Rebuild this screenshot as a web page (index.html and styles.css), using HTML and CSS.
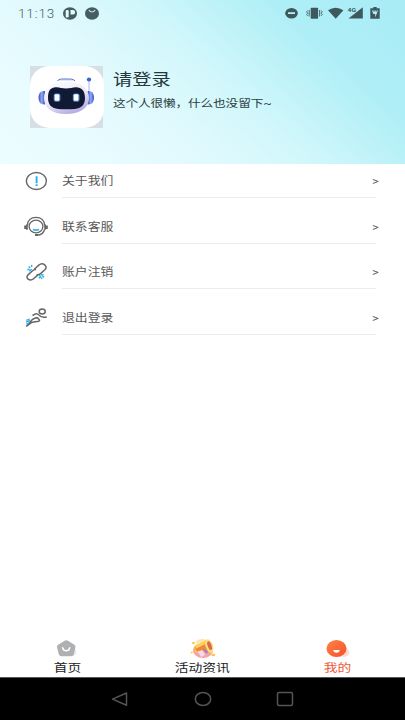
FILE: index.html
```
<!DOCTYPE html>
<html lang="zh-CN">
<head>
<meta charset="utf-8">
<title>我的</title>
<link rel="stylesheet" href="styles.css">
</head>
<body>
<div class="screen">
  <header class="hero">
    <div class="status">
      <span class="clock">11:13</span>
      <svg class="s-p" width="14" height="13" viewBox="0 0 14 13"><ellipse cx="7" cy="6.5" rx="7" ry="6.2" fill="#455c61"/><rect x="2.7" y="3" width="3" height="7.4" rx="1" fill="#e4fafc"/><path d="M7.5 3H10a1.7 1.7 0 0 1 0 4.4H7.5z" fill="#e4fafc"/></svg>
      <svg class="s-bag" width="14" height="13" viewBox="0 0 14 13"><ellipse cx="7" cy="6.5" rx="7" ry="6.2" fill="#455c61"/><path d="M3.8 3.2Q7 6.9 10.2 3.2" fill="none" stroke="#c8e8eb" stroke-width="1.1"/></svg>
      <svg class="s-right" width="96" height="14" viewBox="0 0 96 14" fill="#3e595e">
        <ellipse cx="6.5" cy="7.2" rx="6.3" ry="5.3"/><rect x="3" y="6.2" width="7" height="1.8" fill="#b5eff5"/>
        <rect x="25.700" y="1.8" width="7.4" height="11" rx=".8"/>
        <path d="M24.200 4v6.500M34.600 4v6.500M22.700 4.500l-1.100 1.300 1.100 1.400-1.100 1.300 1.100 1.300M36.100 4.500l1.100 1.300-1.100 1.400 1.100 1.300-1.100 1.300" fill="none" stroke="#3e595e" stroke-width=".9"/>
        <path d="M43 4.3Q50.7-.8 58.4 4.3L50.7 12.8z"/>
        <path d="M77.8 1.3v11.2H63.5z"/><text x="62.500" y="5.6" font-size="6" font-weight="700" textLength="8.5" lengthAdjust="spacingAndGlyphs">4G</text>
        <path d="M85.3 2.3h3V1h3.4v1.3h3v10.5h-9.4z"/><path d="M87 4.500h6L90.200 11.500V8H88.300z" fill="#b5eff5"/><path d="M89 4v2M91.200 4v2" stroke="#3e595e" stroke-width=".7"/>
      </svg>
    </div>
    <div class="profile">
      <div class="avatar">
        <svg width="74" height="62" viewBox="0 0 74 62">
          <defs>
            <linearGradient id="head" x2=".5" y2="1"><stop stop-color="#fff"/><stop offset=".6" stop-color="#ece8f8"/><stop offset="1" stop-color="#b9afe4"/></linearGradient>
            <linearGradient id="ear"><stop stop-color="#3447bd"/><stop offset=".5" stop-color="#8dabf5"/><stop offset="1" stop-color="#3e4bc5"/></linearGradient>
          </defs>
          <rect width="74" height="62" rx="20" ry="19" fill="#fff"/>
          <path d="M27.500 15q.8-2 4-2h9q3.400 0 4.500 2" fill="#dfe7fb" stroke="#5365bd" stroke-width=".9"/>
          <path d="M59 14v14" stroke="#c3caf3" stroke-width="1.400"/><ellipse cx="59" cy="13.500" rx="2.200" ry="1.900" fill="#3b66cc"/>
          <path d="M15 25q-6-1-6.500 6-.2 8 6.500 7.500z" fill="url(#ear)"/><path d="M57.500 25q6-1 6.500 6 .2 8-6.500 7.500z" fill="url(#ear)"/>
          <path d="M36 15.500C50 15.500 59 22 59 32S50 48 36 48 14 42 14 32s8-16.500 22-16.500z" fill="url(#head)"/>
          <path d="M24 21.500c5-1 7 1 12 1s8-2 12-1c5 .8 7 5 7 10.500 0 7-4 10.500-10 10.900q-9 .8-17 0C22 42.400 18 39 18 32c0-6 1.500-9.700 6-10.500z" fill="#111a35"/>
          <rect x="23.700" y="27.500" width="6.700" height="8.200" rx="2" fill="#5784cc"/><rect x="42.800" y="27.500" width="6.700" height="8.200" rx="2" fill="#5784cc"/>
          <rect x="24.700" y="28.200" width="4.600" height="6.600" rx="1.200" fill="#fff"/><rect x="43.800" y="28.200" width="4.600" height="6.600" rx="1.200" fill="#fff"/>
        </svg>
      </div>
      <div class="who">
        <h1 class="wide">请登录</h1>
        <p class="wide">这个人很懒，什么也没留下~</p>
      </div>
    </div>
  </header>
  <main class="menu">
    <div class="row">
      <svg class="ico" width="24" height="22" viewBox="0 0 24 22"><ellipse cx="12.400" cy="11" rx="10" ry="8.500" fill="none" stroke="#686868" stroke-width="1.400"/><path d="M12.600 6.300v6.900M12.600 14.300v1.600" stroke="#25b1e6" stroke-width="1.900"/></svg>
      <div class="cell"><span class="wide">关于我们</span><i class="wide">&gt;</i></div>
    </div>
    <div class="row">
      <svg class="ico" width="24" height="22" viewBox="0 0 24 22" fill="none" stroke="#666" stroke-width="1.300"><ellipse cx="12" cy="10.500" rx="6.900" ry="6.300"/><path d="M3.300 9.500C3.500 4.400 7 1.300 12 1.300s8.500 3.100 8.700 8.200M20.500 13.500c-.8 3.500-3.700 5.500-7.300 5.500"/><path d="M1.100 9.500v3.400M2.900 8.500v5.300M21.100 8.500v5.300M22.900 9.500v3.400M11 19h3" stroke-width="1.800"/><path d="M9 13.500q3 1.300 6 0" stroke="#25b1e6" stroke-width="1.600"/></svg>
      <div class="cell"><span class="wide">联系客服</span><i class="wide">&gt;</i></div>
    </div>
    <div class="row">
      <svg class="ico" width="24" height="22" viewBox="0 0 24 22" fill="none" stroke="#666" stroke-width="1.500"><path d="M10.300 8.200l4.500-4.100c1.700-1.400 4.300-1.500 5.900-.3 1.800 1.400 1.800 3.500.2 5l-4.300 3.800c-1.300 1.100-2.700 1.400-4 1M12 8.700c-1.200-.4-2.400.1-3.700 1.300L4.200 13.600c-1.700 1.500-1.500 3.400-.1 4.500 1.700 1.300 4 1 5.500-.3l4.100-3.700"/><path d="M4.800 5.500l1.500 1.500M7.500 3.800l.3 2M3.300 8.500h2.300M5.300 10.300l2.500-2M15 14.300l2 1.500M14.800 17l2-.8M17 13.700l2.500.3M17.500 16.500l.3 1.700M18.300 15.500l1.800.5" stroke="#25b1e6" stroke-width="1.400"/></svg>
      <div class="cell"><span class="wide">账户注销</span><i class="wide">&gt;</i></div>
    </div>
    <div class="row">
      <svg class="ico" width="24" height="22" viewBox="0 0 24 22" fill="none" stroke="#666" stroke-width="1.500"><ellipse cx="18.200" cy="4.500" rx="3" ry="2.500"/><path d="M8.500 8.500l3-1.600c1.200-.5 2.400 0 3.200 1 1.800 2.300 4 3 8 2M12.800 10.300c2 1.500 3 2.700 2.700 3.400-.5 1-3.500 1-5.700 1.300l-2.500.6L2.300 19.500M8.300 12.500l4.500-2.200M8.300 12.500L2.300 19.500" stroke-linejoin="round"/><path d="M2.300 13.300l3.500-1.300M2 15.200l4-1.500M2.400 17.200l2.500-1.200" stroke="#25b1e6" stroke-width="1.300"/></svg>
      <div class="cell"><span class="wide">退出登录</span><i class="wide">&gt;</i></div>
    </div>
  </main>
  <nav class="tabs">
    <div class="tab">
      <svg width="30" height="22" viewBox="0 0 30 22"><ellipse cx="18.500" cy="14" rx="5" ry="4" fill="#e8e9ea"/><path d="M11.700 2.800q1.500-.9 3.300 0l6.300 3.900q1.500.9 1.100 2.500l-1.700 7.400q-.4 1.700-2.500 1.700H8.500q-2 0-2.600-1.700L4 9.200Q3.700 7.600 5.100 6.700z" fill="#aeb0b2"/><path d="M9.700 9.800q.5 2.900 3.500 2.900t3.500-2.900" fill="none" stroke="#fff" stroke-width="1.500" stroke-linecap="round"/></svg>
      <span class="wide">首页</span>
    </div>
    <div class="tab">
      <svg width="30" height="22" viewBox="0 0 30 22"><ellipse cx="15" cy="12.500" rx="10" ry="7.500" fill="#f5a4a1"/><ellipse cx="14" cy="4" rx="6" ry="3" fill="#ffe5ab"/><path d="M5.500 9L19.500 1.500l5 13-14 .5q-4 0-5-6z" fill="#ffc53f"/><path d="M7 9.500l9-5 4 8.500-9 1q-3-.5-4-4.500z" fill="#ef873f"/><path d="M7.500 8.500l9-4.500.8 2-9 4.500z" fill="#ffd45b"/><ellipse cx="21.300" cy="8" rx="3.600" ry="7" transform="rotate(-20 21.300 8)" fill="#ffdc80"/><ellipse cx="21.600" cy="7.700" rx="1.900" ry="4.600" transform="rotate(-20 21.600 7.700)" fill="#d96c46"/><path d="M9.500 13.500l5-1.500 2.500 5-3.800 2z" fill="#f3d7ed"/><path d="M15 12l3-.5 2.500 3-2.500 1z" fill="#9f82cd"/><ellipse cx="5.500" cy="5" rx="1.700" ry="1.300" fill="#ffcf55"/><ellipse cx="25.300" cy="17" rx="2" ry="1.300" fill="#ffc744"/><ellipse cx="3.700" cy="14.500" rx="1.200" ry="1" fill="#ffcf55"/></svg>
      <span class="wide">活动资讯</span>
    </div>
    <div class="tab on">
      <svg width="30" height="22" viewBox="0 0 30 22"><defs><linearGradient id="face" x2="1" y2="1"><stop stop-color="#ff8244"/><stop offset="1" stop-color="#f4512c"/></linearGradient></defs><ellipse cx="20.500" cy="14.200" rx="5.700" ry="4.500" fill="#ffd9ca"/><ellipse cx="13.500" cy="10.500" rx="10" ry="8.600" fill="url(#face)"/><path d="M10.300 12h6.400q-.3 2.800-3.200 2.800T10.300 12z" fill="#fff"/></svg>
      <span class="wide">我的</span>
    </div>
  </nav>
  <footer class="sysbar">
    <svg width="18" height="16" viewBox="0 0 18 16"><path d="M15.500 2v12.300L1.500 8.100z"/></svg>
    <svg width="18" height="16" viewBox="0 0 18 16"><ellipse cx="9" cy="8" rx="7.700" ry="6.500"/></svg>
    <svg width="18" height="16" viewBox="0 0 18 16"><rect x="1.500" y="1.600" width="15" height="12.800" rx="1.500"/></svg>
  </footer>
</div>
</body>
</html>
```
FILE: styles.css
```
* { box-sizing: border-box; }
body { margin: 0; font-family: Roboto, "Noto Sans CJK SC", sans-serif; background: #fff; }
svg { display: block; flex: none; overflow: visible; }

.screen { width: 405px; height: 720px; display: flex; flex-direction: column; overflow: hidden; }

/* Glyphs in this interface are wider than they are tall. */
.wide { display: block; white-space: nowrap; transform: scaleX(1.1875); transform-origin: left center; }

.hero {
  height: 163.5px;
  flex: none;
  background: linear-gradient(222deg, #a9ecf6 0%, #aeeef7 22%, #bdf2f8 33%, #d0f7fb 46%, #dff9fd 62%, #e9fcff 82%, #ecfdff 100%);
}
.status { height: 26px; display: flex; align-items: center; padding-left: 18px; }
.clock { width: 45px; font-size: 12.5px; font-weight: 300; letter-spacing: .8px; color: #485e63; transform: scaleX(1.08); transform-origin: left; }
.s-bag { margin-left: 8px; }
.s-right { margin-left: auto; margin-right: 24px; }

.profile { display: flex; padding: 40px 0 0 29.5px; }
.avatar { width: 73.5px; height: 61.5px; background: #d6dfe5; }
.who { margin-left: 10px; }
.who h1 { margin: 2px 0 0; font-size: 16.2px; line-height: 24px; font-weight: 400; color: #26383c; }
.who p { margin: 1px 0 0; font-size: 10.7px; line-height: 21px; letter-spacing: -.15px; color: #2c3f43; }

.menu { flex: 1; }
.row { height: 45.6px; display: flex; align-items: center; padding-left: 24px; }
.row:first-child { height: 34.5px; }
.ico { width: 24px; }
.cell { flex: 1; height: 100%; margin: 0 29px 0 14px; padding-bottom: 4px; border-bottom: 1px solid #ececec; display: flex; align-items: flex-end; justify-content: space-between; }
.cell span, .cell i { font-size: 10.8px; line-height: 23px; color: #585858; font-style: normal; }
.cell i { width: 4px; }
.row .ico { align-self: flex-end; margin-bottom: 6px; }

.tabs { height: 42px; flex: none; display: flex; padding-top: 2.5px; }
.tab { flex: 1; display: flex; flex-direction: column; align-items: center; }
.tab span { font-size: 11.6px; line-height: 16px; transform-origin: center; color: #222; }
.tab.on span { color: #ee5b38; }

.sysbar { height: 43px; flex: none; background: #000; border-top: 1px solid #55585a; display: flex; justify-content: center; align-items: center; gap: 64.5px; }
.sysbar svg { fill: none; stroke: #555; stroke-width: 1.5; stroke-linejoin: round; }
```
